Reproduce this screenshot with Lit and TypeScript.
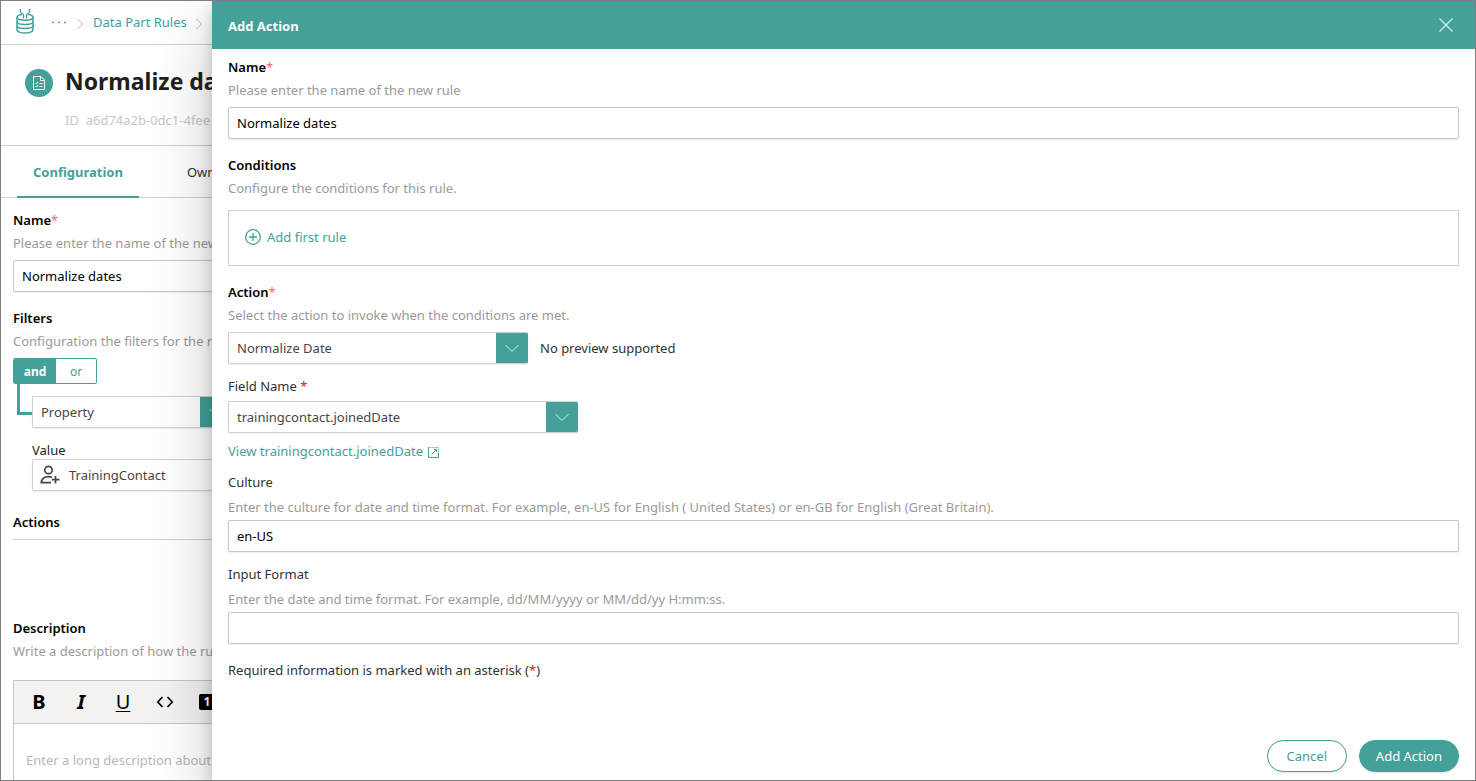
import { LitElement, html, css } from "lit";
import { customElement, state } from "lit/decorators.js";

const chevronDown = html`<svg class="chev" viewBox="0 0 16 16" aria-hidden="true"><path d="M1.500 5l6.500 6.500L14.500 5" /></svg>`;
const chevronRight = html`<svg class="crumb-sep" viewBox="0 0 8 14" aria-hidden="true"><path d="M1 1.500l5.500 5.500L1 12.500" /></svg>`;

@customElement("app-root")
export class AppRoot extends LitElement {
  @state() private join = "and";

  static styles = css`
    :host {
      --teal: #43a199;
      --line: #d2d0ce;
      --hint: #9a9a9a;
      display: grid;
      grid-template-columns: 211px minmax(0, 1fr);
      grid-template-rows: minmax(0, 1fr);
      box-sizing: border-box;
      height: 100vh;
      overflow: hidden;
      border: 1px solid #7f7f7f;
      background: #fff;
      color: #323130;
      font: 13px/20px "Noto Sans", "Open Sans", sans-serif;
    }
    *, *::before, *::after { box-sizing: border-box; }
    h1, h2, h3, p { margin: 0; font-size: inherit; font-weight: inherit; }
    button, input, select, textarea { font: inherit; color: inherit; margin: 0; }
    button { cursor: pointer; padding: 0; border: 0; background: none; }
    a { color: var(--teal); text-decoration: none; }
    svg { display: block; flex: none; fill: none; stroke: currentColor; }

    .behind { overflow: hidden; }
    .behind-inner { width: 100vw; }

    .crumbs { display: flex; align-items: center; height: 44px; padding: 0 14px 2px; border-bottom: 1px solid var(--line); }
    .logo { width: 20px; height: 26px; color: var(--teal); margin: 0 15px 2px 0; }
    .dots { width: 18px; height: 20px; color: #8a8886; }
    .dots svg { width: 18px; height: 20px; fill: currentColor; stroke: none; }
    .crumb-sep { width: 8px; height: 14px; color: #b5b3b1; margin: 4px 9px 0 8px; }

    .title-bar { display: grid; grid-template-columns: 28px auto; grid-template-rows: 32px 20px; align-content: start; justify-content: start; gap: 11px 12px; align-items: center; height: 101px; padding: 22px 24px 0; border-bottom: 1px solid var(--line); white-space: nowrap; }
    .badge { display: grid; place-items: center; width: 28px; height: 28px; border-radius: 50%; background: var(--teal); color: #fff; }
    .badge svg { width: 14px; height: 16px; }
    .title-bar h1 { align-self: start; font-size: 23px; line-height: 28px; font-weight: 700; color: #201f1e; }
    .id { grid-column: 2; color: #c8c6c4; }

    .tabs { display: flex; gap: 32px; padding: 0 16px; height: 52px; border-bottom: 1px solid var(--line); }
    .tab { padding: 0 16px; height: 52px; }
    .tab.on { color: var(--teal); font-weight: 700; box-shadow: inset 0 -2px var(--teal); }

    .page { padding: 12px 12px 0; }
    .label { display: block; font-weight: 600; color: #000; }
    .label.plain { font-weight: 400; color: #323130; }
    .star { color: #ee6a6a; font-weight: 400; }
    .star.strong { color: #e81010; }
    .hint { color: var(--hint); margin-top: 3px; }
    .plain + .hint { margin-top: 5px; }
    .box { display: block; width: 100%; height: 32px; padding: 0 8px; margin-top: 7px; border: 1px solid #c8c6c4; border-radius: 2px; background: #fff; color: #000; outline: 0; box-shadow: 0 1px 2px rgba(0, 0, 0, .07); }
    .plain ~ .box { margin-top: 3px; }
    .group { margin-bottom: 16px; }
    .group.tight { margin-bottom: 12px; }

    .pick { display: grid; grid-template-columns: 1fr 31px; height: 32px; border: 1px solid var(--line); border-right-color: var(--teal); border-radius: 2px; box-shadow: 0 1px 2px rgba(0, 0, 0, .07); overflow: hidden; }
    .pick select { grid-area: 1 / 1 / 2 / 3; appearance: none; border: 0; outline: 0; padding: 0 40px 0 8px; background: #fff; color: #484644; min-width: 0; }
    .pick .arrow { grid-area: 1 / 2; display: grid; place-items: center; background: var(--teal); color: #d5f0ed; pointer-events: none; }
    .chev { width: 16px; height: 16px; }
    .w200 { width: 200px; }
    .w300 { width: 300px; }
    .w350 { width: 350px; }

    .toggle { display: flex; width: 84px; height: 26px; margin-top: 7px; border: 1px solid var(--teal); border-radius: 2px; overflow: hidden; font-size: 12px; }
    .toggle button { flex: 1; padding-top: 1px; color: var(--teal); }
    .toggle button:first-child { flex: none; width: 42px; }
    .toggle button.on { background: var(--teal); color: #fff; font-weight: 700; }
    .branch { display: grid; grid-template-columns: 15px auto; padding-left: 4px; }
    .elbow { height: 31px; border-left: 3px solid var(--teal); border-bottom: 3px solid var(--teal); }
    .branch-body { padding-top: 12px; }
    .value-label { display: block; margin-top: 13px; color: #201f1e; line-height: 18px; }
    .value { display: flex; align-items: center; gap: 9px; width: 300px; height: 32px; padding: 0 7px; border: 1px solid var(--line); border-radius: 2px; color: #484644; box-shadow: 0 1px 2px rgba(0, 0, 0, .07); }
    .value svg { width: 20px; height: 20px; }
    .actions { margin-top: 21px; padding-bottom: 7px; border-bottom: 1px solid var(--line); margin-bottom: 78px; }

    .editor { margin-top: 19px; border: 1px solid #c8c6c4; }
    .tools { display: flex; align-items: center; gap: 18px; height: 43px; padding: 0 13px; background: #f3f2f1; border-bottom: 1px solid #c8c6c4; color: #000; }
    .tools button { display: grid; place-items: center; width: 24px; height: 32px; font-size: 20px; line-height: 24px; }
    .tools .b { font-weight: 700; }
    .tools .i { font-weight: 700; font-style: italic; }
    .tools .u { text-decoration: underline; text-decoration-thickness: 1px; text-underline-offset: 2px; }
    .tools .one { width: 16px; height: 16px; margin-left: 4px; border-radius: 2px; background: #000; color: #fff; font-size: 12px; line-height: 16px; font-weight: 700; }
    .tools svg { width: 18px; height: 18px; }
    .editor textarea { display: block; width: 100%; height: 120px; padding: 26px 12px; border: 0; outline: 0; resize: none; }
    .editor textarea::placeholder { color: #b8b6b4; }

    .drawer { position: relative; display: flex; flex-direction: column; background: #fff; box-shadow: 0 26px 58px rgba(0, 0, 0, .22), 0 5px 14px rgba(0, 0, 0, .18); }
    .drawer-head { display: flex; align-items: center; justify-content: space-between; flex: none; height: 48px; padding: 0 16px; background: var(--teal); color: #fff; }
    .drawer-head h2 { padding-top: 2px; font-weight: 700; }
    .close { display: grid; place-items: center; width: 26px; height: 32px; color: #d5f0ed; }
    .close svg { width: 16px; height: 16px; }
    .drawer-body { flex: 1; min-height: 0; overflow: auto; padding: 8px 16px 0; }
    .rules { display: flex; align-items: flex-start; height: 56px; margin-top: 12px; padding: 16px; border: 1px solid var(--line); }
    .add { display: flex; align-items: center; gap: 6px; color: var(--teal); }
    .add svg { width: 16px; height: 16px; }
    .row { display: flex; align-items: center; gap: 12px; margin-top: 7px; }
    .field { margin-top: 5px; }
    .view { display: flex; align-items: center; gap: 5px; margin: 8px 0 11px; width: max-content; }
    .view svg { width: 11px; height: 11px; margin-top: 2px; }
    .drawer-foot { display: flex; justify-content: flex-end; flex: none; gap: 12px; padding: 8px 16px; }
    .btn { height: 32px; padding: 0 16px; border: 1px solid var(--teal); border-radius: 16px; color: var(--teal); background: #fff; min-width: 80px; box-shadow: 0 1px 2px rgba(0, 0, 0, .1); }
    .btn.primary { background: var(--teal); color: #fff; }
  `;

  private picker(id: string, value: string, size: string) {
    return html`<div class="pick ${size}">
      <select id=${id}><option>${value}</option></select>
      <span class="arrow">${chevronDown}</span>
    </div>`;
  }

  private joinButton(name: string) {
    return html`<button type="button" class=${this.join === name ? "on" : ""} @click=${() => (this.join = name)}>${name}</button>`;
  }

  private renderPage() {
    return html`
      <nav class="crumbs" aria-label="Breadcrumb">
        <svg class="logo" viewBox="0 0 20 26" stroke-width="1.500" aria-hidden="true">
          <path d="M5.500 1v3.500l3 2v4M14.500 1v3.500l-3 2v4" stroke-width="1.300" />
          <path d="M7 6.500C3.800 6.900 2 7.900 2 9.300c0 1.800 3.600 2.900 8 2.900s8-1.100 8-2.900c0-1.400-1.800-2.400-5-2.800" />
          <path d="M2 9.300v12.500C2 23.600 5.600 25 10 25s8-1.400 8-3.200V9.300" />
          <path d="M2 13.400c0 1.800 3.600 3 8 3s8-1.200 8-3M2 17.500c0 1.800 3.600 3 8 3s8-1.200 8-3" />
        </svg>
        <button class="dots" aria-label="More">
          <svg viewBox="0 0 18 20"><circle cx="3" cy="10.500" r="1" /><circle cx="9" cy="10.500" r="1" /><circle cx="15" cy="10.500" r="1" /></svg>
        </button>
        ${chevronRight}
        <a href="#rules">Data Part Rules</a>
        ${chevronRight}
      </nav>
      <header class="title-bar">
        <span class="badge">
          <svg viewBox="0 0 14 16" aria-hidden="true">
            <path d="M1.500 1.500h7.500l3.500 3.500v9.500h-11zM8.500 1.500v4h4" />
            <path d="M3.500 8l1 1 1.500-2M7.500 8.500h3M3.500 11l1 1 1.500-2M7.500 11.500h3" />
          </svg>
        </span>
        <h1>Normalize dates</h1>
        <p class="id">ID&nbsp; a6d74a2b-0dc1-4fee</p>
      </header>
      <div class="tabs">
        <button class="tab on">Configuration</button>
        <button class="tab">Owners</button>
      </div>
      <main class="page">
        <div class="group">
          <label class="label" for="rule-name">Name<span class="star">*</span></label>
          <p class="hint">Please enter the name of the new rule</p>
          <input class="box" id="rule-name" .value=${"Normalize dates"} />
        </div>
        <h3 class="label">Filters</h3>
        <p class="hint">Configuration the filters for the rule</p>
        <div class="toggle">${this.joinButton("and")}${this.joinButton("or")}</div>
        <div class="branch">
          <div class="elbow"></div>
          <div class="branch-body">
            <label aria-label="Filter type">${this.picker("filter", "Property", "w200")}</label>
            <label class="value-label" for="value">Value</label>
            <button class="value" id="value">
              <svg viewBox="0 0 20 20" stroke-width="1.700" aria-hidden="true">
                <circle cx="8.500" cy="5" r="3.700" />
                <path d="M12 12.500c-1-.6-2.200-.9-3.500-.9-4 0-6.700 2-7.200 6h9.700M15.500 11v7.500M11.800 14.700H19.500" />
              </svg>
              TrainingContact
            </button>
          </div>
        </div>
        <h3 class="label actions">Actions</h3>
        <label class="label" for="description">Description</label>
        <p class="hint">Write a description of how the rule works</p>
        <div class="editor">
          <div class="tools">
            <button class="b" aria-label="Bold">B</button>
            <button class="i" aria-label="Italic">I</button>
            <button class="u" aria-label="Underline">U</button>
            <button aria-label="Code"><svg viewBox="0 0 18 18" stroke-width="1.700"><path d="M6.500 4L1.800 9l4.700 5M11.500 4l4.700 5-4.700 5" /></svg></button>
            <button class="one" aria-label="Heading 1">1</button>
          </div>
          <textarea id="description" placeholder="Enter a long description about"></textarea>
        </div>
      </main>
    `;
  }

  private renderDrawer() {
    return html`
      <section class="drawer" role="dialog" aria-label="Add Action">
        <header class="drawer-head">
          <h2>Add Action</h2>
          <button class="close" aria-label="Close"><svg viewBox="0 0 16 16" stroke-width="1.300"><path d="M1.500 1.500l13 13M14.500 1.500l-13 13" /></svg></button>
        </header>
        <div class="drawer-body">
          <div class="group">
            <label class="label" for="name">Name<span class="star">*</span></label>
            <p class="hint">Please enter the name of the new rule</p>
            <input class="box" id="name" .value=${"Normalize dates"} />
          </div>
          <div class="group">
            <h3 class="label">Conditions</h3>
            <p class="hint">Configure the conditions for this rule.</p>
            <div class="rules">
              <button class="add">
                <svg viewBox="0 0 16 16" stroke-width="1.300"><circle cx="8" cy="8" r="7.300" /><path d="M8 4v8M4 8h8" /></svg>
                Add first rule
              </button>
            </div>
          </div>
          <div class="group tight">
            <label class="label" for="action">Action<span class="star">*</span></label>
            <p class="hint">Select the action to invoke when the conditions are met.</p>
            <div class="row">${this.picker("action", "Normalize Date", "w300")}<span>No preview supported</span></div>
          </div>
          <label class="label plain" for="field">Field Name <span class="star strong">*</span></label>
          <div class="field">${this.picker("field", "trainingcontact.joinedDate", "w350")}</div>
          <a class="view" href="#field">View trainingcontact.joinedDate
            <svg viewBox="0 0 11 11" aria-hidden="true"><path d="M.5 0v10.500h10V6" /><path d="M0 .5h10.500V6" opacity=".5" /><path d="M6 2.500h2.500V5M8.500 2.500L3.500 7.500" /></svg>
          </a>
          <div class="group tight">
            <label class="label plain" for="culture">Culture</label>
            <p class="hint">Enter the culture for date and time format. For example, en-US for English ( United States) or en-GB for English (Great Britain).</p>
            <input class="box" id="culture" .value=${"en-US"} />
          </div>
          <div class="group">
            <label class="label plain" for="format">Input Format</label>
            <p class="hint">Enter the date and time format. For example, dd/MM/yyyy or MM/dd/yy H:mm:ss.</p>
            <input class="box" id="format" />
          </div>
          <p>Required information is marked with an asterisk (<span class="star strong">*</span>)</p>
        </div>
        <footer class="drawer-foot">
          <button class="btn">Cancel</button>
          <button class="btn primary">Add Action</button>
        </footer>
      </section>
    `;
  }

  render() {
    return html`<div class="behind"><div class="behind-inner">${this.renderPage()}</div></div>${this.renderDrawer()}`;
  }
}
